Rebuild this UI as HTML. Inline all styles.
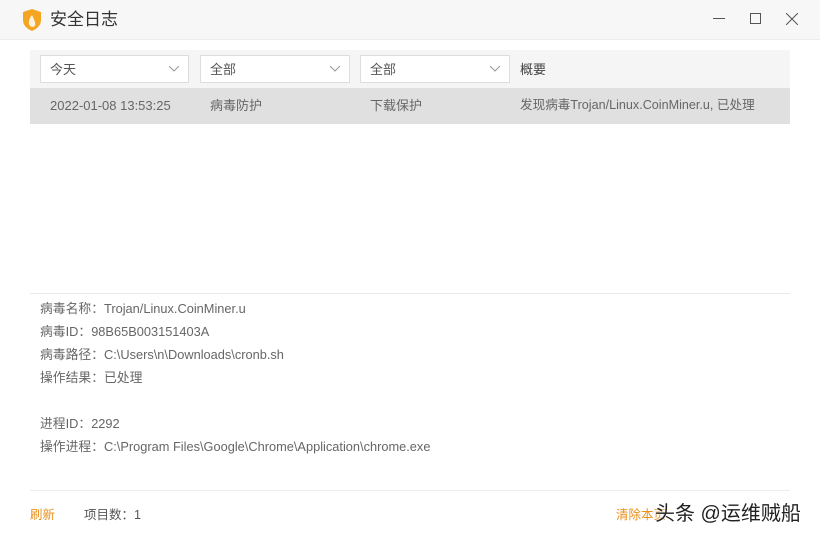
<!DOCTYPE html>
<html><head><meta charset="utf-8"><style>
*{margin:0;padding:0;box-sizing:border-box}
body{width:820px;height:540px;background:#fff;font-family:"Liberation Sans","Noto Sans CJK SC",sans-serif;position:relative;overflow:hidden;color:#666;line-height:1.2}
.a{position:absolute;white-space:nowrap}
.title{top:0;left:0;width:820px;height:40px;background:#f7f7f7;border-bottom:1px solid #ececec}
.sel{top:55px;height:28px;border:1px solid #ddd;background:#fff;font-size:13px;padding:6px 9px 0;color:#555}
.sel svg{position:absolute;right:9px;top:10px}
.t{font-size:12.8px;color:#666}
</style></head><body>
<div class="a title"></div>
<svg class="a" style="left:22px;top:9px" width="20" height="22" viewBox="0 0 20 22"><path d="M1 3 L10 0 L19 3 L19 11 Q19 18 10 22 Q1 18 1 11Z" fill="#f4a623"/><path d="M10 6 Q6 11 7 15 Q8 18 11 18 Q14 17 13 13 Q12 10 10 6Z" fill="#fff" opacity=".85"/></svg>
<div class="a" style="left:50px;top:10px;font-size:17px;color:#333">安全日志</div>
<svg class="a" style="left:713px;top:18px" width="12" height="2"><rect width="12" height="1" fill="#555"/></svg>
<svg class="a" style="left:750px;top:13px" width="11" height="11"><rect x=".5" y=".5" width="10" height="10" fill="none" stroke="#555"/></svg>
<svg class="a" style="left:786px;top:13px" width="12" height="12"><path d="M0 0L12 12M12 0L0 12" stroke="#555"/></svg>
<div class="a" style="left:30px;top:50px;width:760px;height:38px;background:#f5f5f5"></div>
<div class="a sel" style="left:40px;width:149px">今天<svg width="10" height="6"><path d="M0 0L5 5L10 0" fill="none" stroke="#999"/></svg></div>
<div class="a sel" style="left:200px;width:150px">全部<svg width="10" height="6"><path d="M0 0L5 5L10 0" fill="none" stroke="#999"/></svg></div>
<div class="a sel" style="left:360px;width:150px">全部<svg width="10" height="6"><path d="M0 0L5 5L10 0" fill="none" stroke="#999"/></svg></div>
<div class="a" style="left:520px;top:62px;font-size:13px;color:#444">概要</div>
<div class="a" style="left:30px;top:88px;width:760px;height:36px;background:#e0e0e0"></div>
<div class="a" style="left:50px;top:98px;font-size:13px;color:#666">2022-01-08 13:53:25</div>
<div class="a" style="left:210px;top:98px;font-size:13px;color:#666">病毒防护</div>
<div class="a" style="left:370px;top:98px;font-size:13px;color:#666">下载保护</div>
<div class="a" style="left:520px;top:98px;font-size:12.6px;color:#666">发现病毒Trojan/Linux.CoinMiner.u, 已处理</div>
<div class="a" style="left:30px;top:293px;width:760px;height:1px;background:#e8e8e8"></div>
<div class="a t" style="left:40px;top:301px">病毒名称：Trojan/Linux.CoinMiner.u</div>
<div class="a t" style="left:40px;top:324px">病毒ID：98B65B003151403A</div>
<div class="a t" style="left:40px;top:347px">病毒路径：C:\Users\n\Downloads\cronb.sh</div>
<div class="a t" style="left:40px;top:370px">操作结果：已处理</div>
<div class="a t" style="left:40px;top:416px">进程ID：2292</div>
<div class="a t" style="left:40px;top:439px">操作进程：C:\Program Files\Google\Chrome\Application\chrome.exe</div>
<div class="a" style="left:30px;top:490px;width:760px;height:1px;background:#eee"></div>
<div class="a" style="left:30px;top:508px;font-size:12.5px;color:#e8901a">刷新</div>
<div class="a t" style="left:84px;top:508px;font-size:12.5px;color:#555">项目数：1</div>
<div class="a" style="left:616px;top:508px;font-size:12.5px;color:#e8901a">清除本页</div>
<div class="a" style="left:655px;top:502px;font-size:20px;color:#222;text-shadow:0 0 2px #fff,0 0 2px #fff">头条 @运维贼船</div>
</body></html>
